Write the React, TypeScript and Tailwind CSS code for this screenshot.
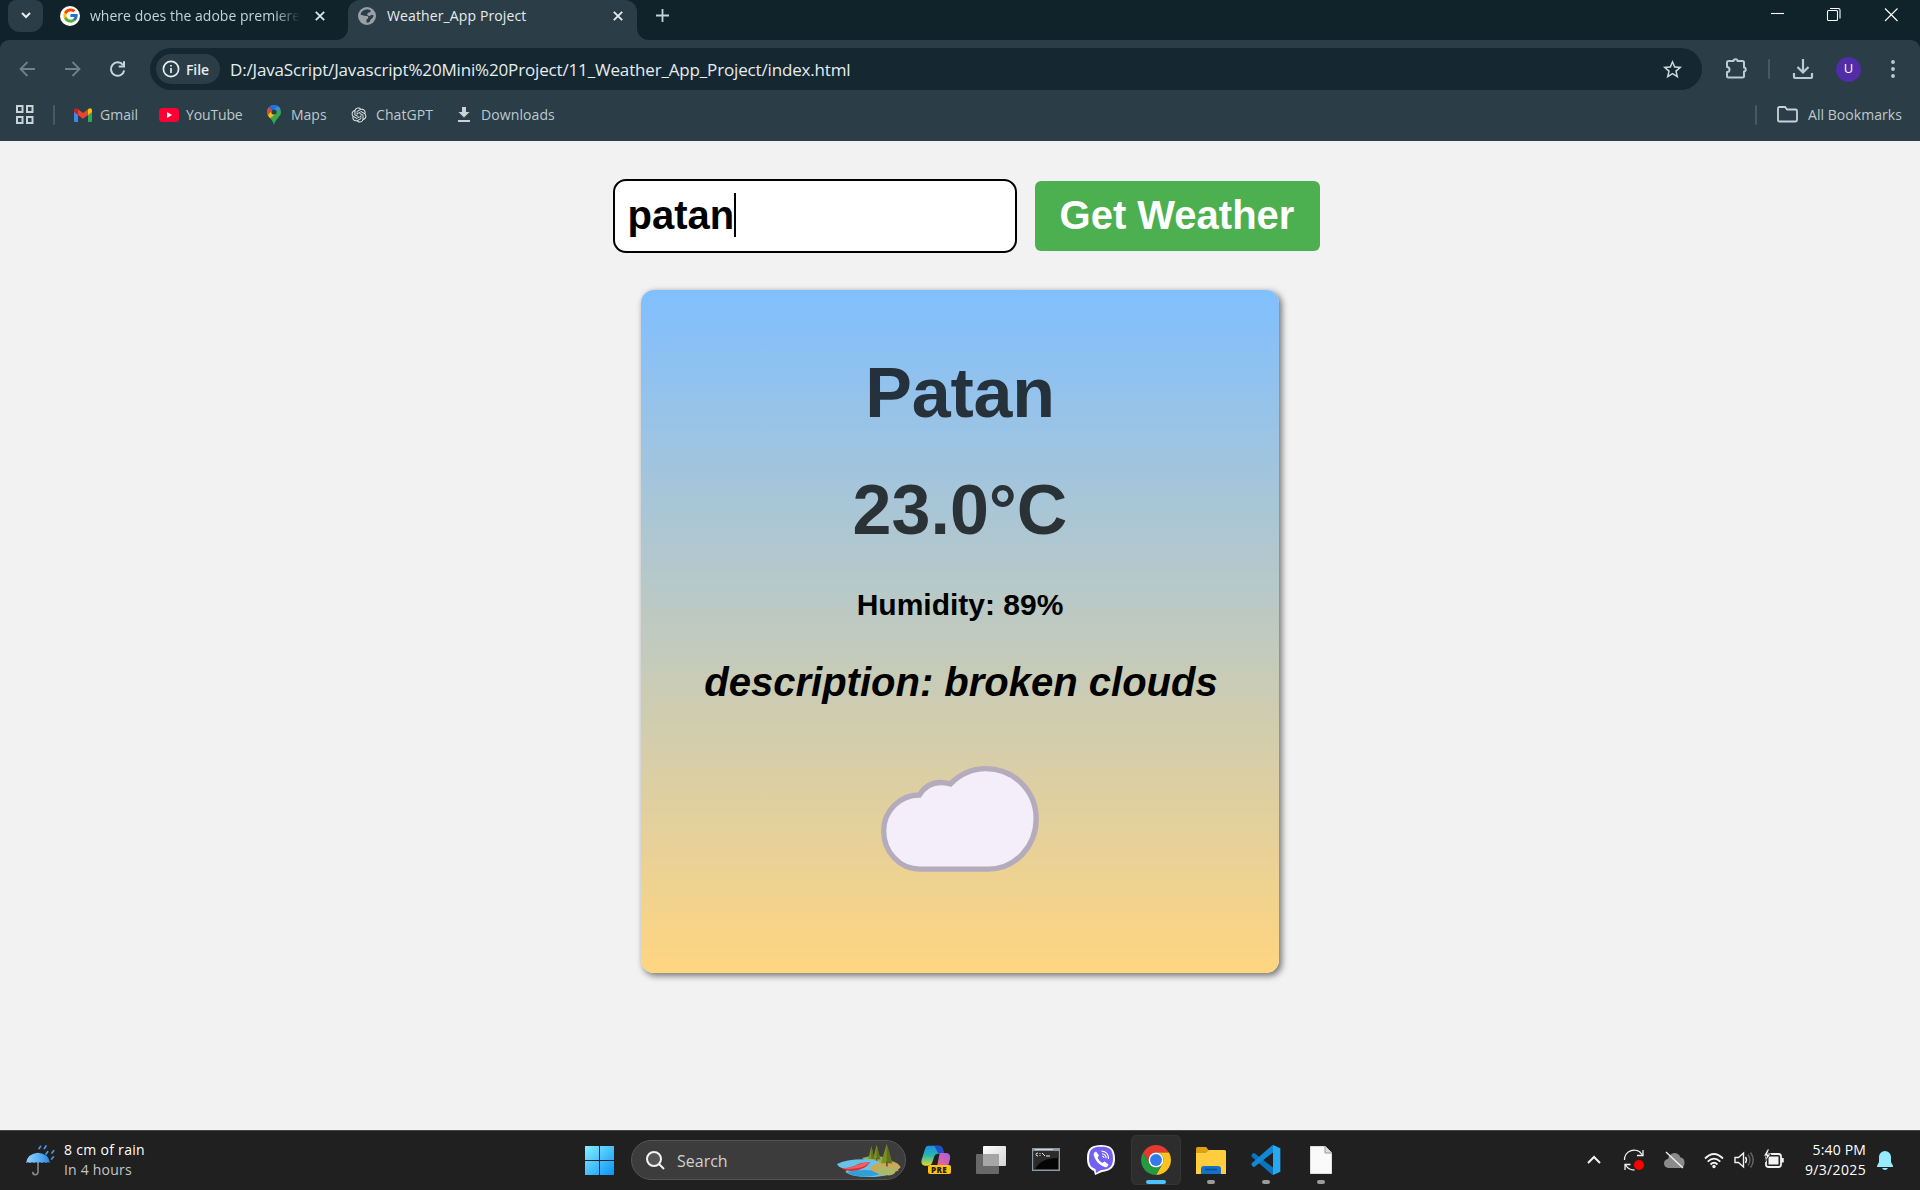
import React from "react";
import { FcGoogle } from "react-icons/fc";
import { RiOpenaiFill } from "react-icons/ri";
import { MdStarBorder } from "react-icons/md";

const ui = "font-['Open_Sans','Noto_Sans',sans-serif]";

function Cross({ className = "" }: { className?: string }) {
  return (
    <svg className={className} width="10" height="10" viewBox="0 0 10 10" stroke="currentColor" strokeWidth="1.8" fill="none">
      <path d="M.8.8l8.4 8.4M9.2.8L.8 9.2" />
    </svg>
  );
}

function GlobeIcon() {
  return (
    <svg width="18" height="18" viewBox="0 0 18 18">
      <circle cx="9" cy="9" r="9" fill="#9aa0a6" />
      <path d="M9.500 2.200Q4 2.500 2.400 7.500l3.800 1.300 3.300.2q1.500 1.200.5 2.500L8.500 12.500v3.300l3-.6 1-2.400 2-1.800 1.300-2.500-2.200-.8-2.200 1.500-2.400-1.500 1-2 2.200-.4.500-2z" fill="#2b3d46" />
      <path d="M2 9.500l2.500 1.500 1.500 2 .5 3Q2.500 14.500 2 9.500z" fill="#9aa0a6" />
    </svg>
  );
}

function TabStrip() {
  return (
    <div className="flex h-10 items-start bg-[#10232b] text-[14px] text-[#c4d3da]">
      <div className="ml-2 flex h-8 w-[35px] items-center justify-center rounded-b-[12px] rounded-t-[8px] bg-[#2b3d46] text-[#e6edf0]">
        <svg width="10" height="7" viewBox="0 0 10 7" className="-mt-0.5" fill="none" stroke="currentColor" strokeWidth="2">
          <path d="M1 1l4 4 4-4" />
        </svg>
      </div>
      <div className="flex h-[31px] w-[305px] items-center pl-[17px]">
        <span className="flex size-5 items-center justify-center rounded-full bg-white">
          <FcGoogle size={17} />
        </span>
        <span className="ml-[10px] w-[210px] overflow-hidden whitespace-nowrap tracking-[0.02px] [mask-image:linear-gradient(to_right,black_88%,transparent)]">
          where does the adobe premiere
        </span>
        <Cross className="ml-[15px] text-[#dbe5e9]" />
      </div>
      <div className="relative flex h-10 w-[289px] items-start rounded-t-[12px] bg-[#2b3d46] text-[#e6edf0]">
        <svg className="absolute -left-[12px] bottom-0" width="12" height="12" viewBox="0 0 12 12">
          <path d="M12 0v12H0A12 12 0 0 0 12 0z" fill="#2b3d46" />
        </svg>
        <svg className="absolute -right-[12px] bottom-0" width="12" height="12" viewBox="0 0 12 12">
          <path d="M0 0v12h12A12 12 0 0 1 0 0z" fill="#2b3d46" />
        </svg>
        <div className="flex h-[31px] w-full items-center pl-[10px]">
          <GlobeIcon />
          <span className="ml-[11px] w-[226px] whitespace-nowrap tracking-[0.12px]">Weather_App Project</span>
          <Cross />
        </div>
      </div>
      <svg className="ml-[19px] mt-[9px] text-[#c4d3da]" width="13" height="13" viewBox="0 0 13 13" stroke="currentColor" strokeWidth="1.8">
        <path d="M6.5 0v13M0 6.5h13" />
      </svg>
      <svg className="ml-auto mr-[22px] mt-[7px] text-white" width="127" height="15" viewBox="0 0 127 15" fill="none" stroke="currentColor" strokeWidth="1.1">
        <path d="M0 6.5h13" />
        <rect x="56.5" y="3.5" width="10" height="10" rx="1" />
        <path d="M59 1.5h8.500a1.500 1.500 0 0 1 1.500 1.500v8.500" />
        <path d="M114 1.500l12.500 12.500M126.500 1.500L114 14" />
      </svg>
    </div>
  );
}

function Toolbar() {
  return (
    <div className="bg-[#10232b]">
      <div className="flex h-[56px] items-center rounded-t-[9px] bg-[#2b3d46] pt-[2px] text-[#b9cbd3]">
        <svg className="ml-[19px]" width="108" height="18" viewBox="0 0 108 18" fill="none" strokeWidth="1.8">
          <g stroke="#71818a">
            <path d="M16 9H2M8.500 2L1.500 9l7 7" />
            <path d="M46 9h14M53.500 2l7 7-7 7" />
          </g>
          <g stroke="#c6d6dd" strokeWidth="2">
            <path d="M104 5A6.700 6.700 0 1 0 105.200 10.500" />
            <path d="M105 1.200v5.300h-5.300" />
          </g>
        </svg>
        <div className="ml-[23px] flex h-[42px] w-[1552px] items-center rounded-full bg-[#152831] pl-[6px]">
          <div className="flex h-[30px] w-[64px] items-center rounded-full bg-[#2b3d46] pl-[6px] text-[#e6edf0]">
            <svg width="18" height="18" viewBox="0 0 18 18" fill="none" stroke="currentColor" strokeWidth="1.7">
              <circle cx="9" cy="9" r="7.600" />
              <path d="M9 8v5M9 5v1.600" />
            </svg>
            <span className="ml-[6px] text-[14px] font-semibold tracking-[-0.1px]">File</span>
          </div>
          <span className="ml-[10px] mt-[2px] whitespace-nowrap text-[17px] tracking-[-0.16px] text-[#e6edf0]">
            D:/JavaScript/Javascript%20Mini%20Project/11_Weather_App_Project/index.html
          </span>
          <MdStarBorder size={23} className="ml-auto mr-[18px] text-[#ccd6da]" />
        </div>
        <svg className="ml-[22px]" width="24" height="24" viewBox="0 0 24 24" fill="none" stroke="currentColor" strokeWidth="2">
          <path d="M3 5.500q0-1.500 1.500-1.500H9.500a2 1.700 0 0 1 4 0h5q1.500 0 1.500 1.500v5a1.700 2 0 0 1 0 4v4.500q0 1.500-1.500 1.500h-14Q3 20.500 3 19v-4a2.500 2.500 0 0 0 0-5z" strokeLinejoin="round" />
        </svg>
        <span className="ml-[20px] h-5 w-[2px] rounded bg-[#445a65]" />
        <svg className="ml-[22px]" width="22" height="22" viewBox="0 0 22 22" fill="none" stroke="currentColor" strokeWidth="2.200">
          <path d="M11 1v13M5.500 9l5.500 5.500L16.500 9M2 15v4q0 1 1 1h16q1 0 1-1v-4" />
        </svg>
        <span className="ml-[22px] flex size-[25px] items-center justify-center rounded-full bg-[#512da8] text-[13px] text-white">U</span>
        <svg className="ml-[30px]" width="4" height="20" viewBox="0 0 4 20" fill="currentColor">
          <circle cx="2" cy="3" r="1.900" />
          <circle cx="2" cy="10" r="1.900" />
          <circle cx="2" cy="17" r="1.900" />
        </svg>
      </div>
    </div>
  );
}

function GmailIcon() {
  return (
    <svg width="18" height="14" viewBox="0 0 18 14">
      <path d="M0 2v10.800Q0 14 1.200 14H4V5z" fill="#4285f4" />
      <path d="M18 2v10.800q0 1.200-1.200 1.200H14V5z" fill="#34a853" />
      <path d="M14 1.200V7l4-3V2.200C18 .2 15.800-.6 14 1.200z" fill="#fbbc04" />
      <path d="M4 1.200V7l5 3.800L14 7V1.200L9 5z" fill="#ea4335" />
      <path d="M4 1.200V7L0 4V2.200C0 .2 2.200-.6 4 1.200z" fill="#c5221f" />
    </svg>
  );
}

function MapsIcon() {
  return (
    <svg width="14" height="20" viewBox="0 0 14 20">
      <path d="M7 0a7 7 0 0 0-7 7c0 5 5.500 6.500 7 13 1.500-6.500 7-8 7-13a7 7 0 0 0-7-7z" fill="#34a853" />
      <path d="M7 0a7 7 0 0 0-5.400 2.500L5 5.400 11 1.300A7 7 0 0 0 7 0z" fill="#1a73e8" />
      <path d="M11 1.300L4.800 9 13.500 4.300A7 7 0 0 0 11 1.300z" fill="#4285f4" />
      <path d="M1.600 2.500A7 7 0 0 0 .9 10.300L5 5.400z" fill="#ea4335" />
      <path d="M.9 10.300q.8 1.600 2.200 3L9 8.700 5 5.400z" fill="#fbbc04" />
      <circle cx="7" cy="7" r="2.600" fill="#2b3d46" />
    </svg>
  );
}

function Bookmarks() {
  return (
    <div className="flex h-[45px] items-center bg-[#2b3d46] pb-[8px] text-[14px] text-[#bdc9cf]">
      <svg className="ml-[16px]" width="18" height="19" viewBox="0 0 18 19" fill="none" stroke="#c9d2d6" strokeWidth="2">
        <rect x="1" y="1" width="5.500" height="6" />
        <rect x="11" y="1" width="5.500" height="6" />
        <rect x="1" y="12" width="5.500" height="6" />
        <rect x="11" y="12" width="5.500" height="6" />
      </svg>
      <span className="ml-[19px] h-5 w-[2px] rounded bg-[#445a65]" />
      <div className="ml-[19px] flex w-[85px] items-center gap-[8px]"><GmailIcon />Gmail</div>
      <div className="flex w-[108px] items-center gap-[7px] tracking-[-0.15px]">
        <svg width="20" height="14" viewBox="0 0 20 14">
          <rect width="20" height="14" rx="3.500" fill="#ff0033" />
          <path d="M8 4v6l5-3z" fill="#fff" />
        </svg>
        YouTube
      </div>
      <div className="flex w-[83px] items-center gap-[10px]"><MapsIcon />Maps</div>
      <div className="flex w-[108px] items-center gap-[8px] tracking-[0.1px]"><RiOpenaiFill size={18} className="text-[#dfe6e9]" />ChatGPT</div>
      <div className="flex items-center gap-[11px] tracking-[0.1px]">
        <svg width="12" height="15" viewBox="0 0 12 15" fill="#c9d2d6">
          <path d="M4 0h4v5h3.500L6 10.500.500 5H4zM0 13h12v2H0z" />
        </svg>
        Downloads
      </div>
      <span className="ml-auto h-5 w-[2px] rounded bg-[#445a65]" />
      <svg className="ml-[20px]" width="21" height="17" viewBox="0 0 21 17" fill="none" stroke="#c9d2d6" strokeWidth="1.800">
        <path d="M1 2.500Q1 1 2.500 1H8l2.200 2.500h8.300q1.500 0 1.500 1.500v9q0 1.500-1.500 1.500h-16Q1 15.500 1 14z" />
      </svg>
      <span className="ml-[10px] mr-[17px] w-[95px] whitespace-nowrap tracking-[0.05px]">All Bookmarks</span>
    </div>
  );
}

function WeatherPage() {
  return (
    <div className="flex h-[989px] flex-col items-center bg-[#f2f2f2] font-['Liberation_Sans',Arial,sans-serif] font-bold text-black">
      <div className="mt-[38px] flex h-[74px] w-[707px] translate-x-[6px] items-start">
        <div className="flex h-[74px] w-[404px] items-center rounded-[13px] border-2 border-black bg-white pl-[13px] text-[40px] leading-[46px]">
          <span className="-mt-[3px]">patan</span>
          <span className="h-[44px] w-[1.500px] -translate-y-px bg-black" />
        </div>
        <div className="ml-[18px] mt-[2px] flex h-[70px] w-[285px] items-center justify-center rounded-[6px] bg-[#4caf50] pb-[2px] text-[40px] leading-[46px] text-white">
          Get Weather
        </div>
      </div>
      <div className="mt-[37px] flex h-[683px] w-[638px] flex-col items-center rounded-[13px] bg-linear-to-b/srgb from-[#80bfff] to-[#ffd580] shadow-[2.500px_2.500px_6px_rgba(0,0,0,0.5)]">
        <h1 className="mt-[63px] text-[70px] leading-[80px] tracking-[-0.2px] text-black/75">Patan</h1>
        <p className="mt-[37px] text-[70px] leading-[80px] text-black/75">23.0°C</p>
        <p className="mt-[38px] text-[30px] leading-[34px]">Humidity: 89%</p>
        <p className="ml-[2px] mt-[37px] text-[40px] italic leading-[46px]">description: broken clouds</p>
        <svg className="mt-[61px]" width="158" height="106" viewBox="123 78 474 318" fill="#f3eef9" stroke="#b4acbc" strokeWidth="16">
          <path d="M240 387.500C178 387.500 131 335 131 272C131 212 180 165 238 165C258 133 290 120 331 132C360 103 395 86 437 86C525 86 588.500 155 588.500 237C588.500 317 527 387.500 445 387.500Z" />
        </svg>
      </div>
    </div>
  );
}

function ChromeIcon() {
  return (
    <svg width="30" height="30" viewBox="2 2 44 44">
      <path d="M4.950 13A22 22 0 0 1 43.050 13L24 13A11 11 0 0 0 14.470 29.500Z" fill="#e33b2e" />
      <path d="M43.050 13A22 22 0 0 1 24 46L33.530 29.500A11 11 0 0 0 24 13Z" fill="#fcc31e" />
      <path d="M24 46A22 22 0 0 1 4.950 13L14.470 29.500A11 11 0 0 0 33.530 29.500Z" fill="#249a41" />
      <circle cx="24" cy="24" r="11" fill="#fff" />
      <circle cx="24" cy="24" r="8.700" fill="#2f7bea" />
    </svg>
  );
}

function LakeArt() {
  return (
    <svg width="64" height="33" viewBox="0 0 192 99">
      <path d="M75 42q30-10 60-4l30 12 20 30q-30 10-60 0z" fill="#8fae5a" />
      <path d="M0 60Q25 46 80 46q40 0 60 14l20 28q-20 12-60 11-60 0-75-16 10-6-3-10Q5 72 0 60z" fill="#68c3ea" />
      <path d="M30 84q50-12 110 0-20 14-60 14-40-2-50-14z" fill="#2f9fd6" />
      <path d="M98 72q20-20 60-22 26 4 33 20-16 20-50 20-30 0-43-18z" fill="#c9a95a" />
      <path d="M14 73q10 8 30 8 40-2 56-26-30 0-46 10-20 8-40 8z" fill="#d92f36" />
      <path d="M14 73q30-2 46-10 20-8 38-8-10 14-40 18-24 4-44 0z" fill="#f26060" />
      <path d="M103 6l9 38H94zM119 2l11 44h-22zM149 0l17 58h-34z" fill="#7e8f22" />
      <path d="M103 6l9 38h-9zM119 2l11 44h-11zM149 0l17 58h-17z" fill="#5f7420" />
      <path d="M147 54h5v14h-5zM117 42h4v8h-4z" fill="#7a4a26" />
      <path d="M122 88q2-18 12-20 10-8 20 4 14-4 22 10-4 14-26 12-20 4-28-6z" fill="#a9b968" />
    </svg>
  );
}

function CopilotIcon() {
  return (
    <span className="relative block h-[30px] w-[30px]">
      <svg width="30" height="26" viewBox="0 0 90 78">
        <defs>
          <linearGradient id="cpA" x1="0" y1="0" x2="0" y2="1">
            <stop offset="0" stopColor="#1c8fe8" />
            <stop offset=".5" stopColor="#29b7b0" />
            <stop offset="1" stopColor="#e4d72c" />
          </linearGradient>
          <linearGradient id="cpB" x1="1" y1="0" x2="0" y2="1">
            <stop offset="0" stopColor="#a45ee8" />
            <stop offset=".6" stopColor="#e2639c" />
            <stop offset="1" stopColor="#f79a55" />
          </linearGradient>
        </defs>
        <path d="M22 2h30q10 0 13 10l4 14H50q-8 0-10 8l-6 18q-3 10-14 10H12Q-2 60 2 44L12 12Q15 2 22 2z" fill="url(#cpA)" />
        <path d="M40 2h14q9 0 12 10l4 14H56q-6-2-8-8z" fill="#1f50c8" />
        <path d="M58 24h18q14 2 11 18l-7 26q-3 8-12 8H38q8-2 10-10l6-32q1-8 4-10z" fill="url(#cpB)" />
      </svg>
      <span className="absolute bottom-[1px] left-[7px] flex h-[9px] w-[23px] items-center justify-center rounded-[2px] bg-[#ffc20e] text-[8px] font-extrabold leading-none tracking-[0.400px] text-[#1d1d1d]">PRE</span>
    </span>
  );
}

function VsCodeIcon() {
  return (
    <svg width="30" height="30" viewBox="0 0 90 90">
      <path d="M4 27q3-4 7-2L67 68v21q-3 1-5-1L2 35q-2-3 2-8z" fill="#0a74bd" />
      <path d="M4 63q3 4 7 2L67 22V1q-3-1-5 1L2 55q-2 3 2 8z" fill="#1287d4" />
      <path d="M66 0v90l22-10V10z" fill="#29a8f2" />
    </svg>
  );
}

function Dot() {
  return <span className="absolute bottom-[6px] h-[4px] w-[8px] rounded-full bg-[#9b9b9b]" />;
}

function TaskSlot({ children, className = "" }: { children: React.ReactNode; className?: string }) {
  return <div className={"relative flex h-[60px] w-[55px] shrink-0 items-center justify-center " + className}>{children}</div>;
}

function Taskbar() {
  return (
    <div className="flex h-[60px] items-center bg-[#202021] shadow-[inset_0_1px_0_#454647]">
      <div className="flex w-[585px] items-center pl-[25px]">
        <svg width="30" height="31" viewBox="0 0 90 93">
          <defs>
            <linearGradient id="umb" x1="0" x2="1">
              <stop offset="0" stopColor="#9bd0fb" />
              <stop offset=".5" stopColor="#5db4f8" />
              <stop offset="1" stopColor="#2c86dc" />
            </linearGradient>
          </defs>
          <path d="M39 52v30q-2 8-9 7-7-1-7-9" fill="none" stroke="#858585" strokeWidth="5" />
          <path d="M3 54Q8 25 39 23q31 2 36 31-6-5-12 0-6-5-12 0-6-5-12 0-6-5-12 0-6-5-12 0-6-5-12 0z" fill="url(#umb)" />
          <path d="M47 4l-5 7M63 3l-5 8M68 20l-5 7M86 17l-5 7M85 36l-5 6" stroke="#429de8" strokeWidth="5" strokeLinecap="round" />
        </svg>
        <div className="ml-[9px] whitespace-nowrap text-[14px] leading-5">
          <p className="tracking-[0.300px] text-white">8 cm of rain</p>
          <p className="tracking-[0.200px] text-[#c5c5c5]">In 4 hours</p>
        </div>
      </div>
      <svg width="29" height="29" viewBox="0 0 29 29">
        <defs>
          <linearGradient id="win" x1="0" y1="0" x2="1" y2="1">
            <stop offset="0" stopColor="#84f0ff" />
            <stop offset="1" stopColor="#0a93f8" />
          </linearGradient>
        </defs>
        <path d="M0 0h14v14H0zM15 0h14v14H15zM0 15h14v14H0zM15 15h14v14H15z" fill="url(#win)" />
      </svg>
      <div className="ml-[17px] flex h-10 w-[275px] items-center rounded-full border border-[#555] bg-[#3c3c3d] pl-[14px] text-[16px] text-[#d0d0d0]">
        <svg width="19" height="19" viewBox="0 0 19 19" fill="#555" stroke="#f2f2f2" strokeWidth="2">
          <circle cx="8" cy="8" r="7" />
          <path d="M13 13l5 5" />
        </svg>
        <span className="ml-[12px] mt-[2px]">Search</span>
        <span className="ml-auto mr-[4px]"><LakeArt /></span>
      </div>
      <TaskSlot className="ml-[2px]"><CopilotIcon /></TaskSlot>
      <TaskSlot>
        <svg width="30" height="28" viewBox="0 0 30 28">
          <defs>
            <linearGradient id="tvw" x1="0" y1="0" x2="1" y2="1"><stop offset="0" stopColor="#fff" /><stop offset="1" stopColor="#d2d2d2" /></linearGradient>
          </defs>
          <rect x="7" width="23" height="20" rx="1" fill="url(#tvw)" />
          <rect y="8" width="23" height="20" rx="1" fill="#686868" />
          <path d="M7 8h16v12H7z" fill="#a6a6a6" />
        </svg>
      </TaskSlot>
      <TaskSlot className="pb-0.5">
        <svg width="28" height="23" viewBox="0 0 28 23">
          <rect width="28" height="23" fill="#8e98a1" />
          <rect x="1.500" y="3" width="25" height="18.500" fill="#050505" />
          <path d="M1.500 3h25v7Q8 10 3 21.500H1.500z" fill="#2b2b2b" />
          <path d="M3 1.500h18" stroke="#cdd3d8" />
          <path d="M6 5q-2 0-2 1.500T6 8M8 5v1M8 7v1M10 5l3 3M14 8h4" stroke="#eee" fill="none" />
        </svg>
      </TaskSlot>
      <TaskSlot>
        <svg width="30" height="30" viewBox="0 0 30 30">
          <path d="M15 0C24 0 29 3 29 14c0 9-5 12-13 13l-7 3-1-4C3 24 1 20 1 13 1 3 6 0 15 0z" fill="#fff" />
          <path d="M15 1.800c8.500 0 12 2 12 12 0 8-4 11-12 11.200l-5 3-.5-4C4.500 22.500 3 19 3 13.500 3 4 7 1.800 15 1.800z" fill="#7360f2" />
          <path d="M10 6.500l3 4-1.500 2q1.500 4 5 5.500l2-1.500 4 3q-1 3.500-4 2.500Q9 18 7.500 9q.5-2 2.500-2.500z" fill="#fff" />
          <path d="M15.500 6q7 .5 7 8M16 8.700q4 .3 4.200 4.600M16.200 11q1.700.2 1.800 2" fill="none" stroke="#fff" strokeWidth="1.100" />
        </svg>
      </TaskSlot>
      <TaskSlot>
        <span className="absolute h-[50px] w-[50px] rounded-[5px] border border-[#353536] bg-[#2d2d2e]" />
        <span className="relative"><ChromeIcon /></span>
        <span className="absolute bottom-[6px] h-[4px] w-[20px] rounded-full bg-[#4cc2ff]" />
      </TaskSlot>
      <TaskSlot>
        <svg width="30" height="27" viewBox="0 0 30 27">
          <path d="M0 1.500Q0 0 1.500 0H10l3 3.500V9H0z" fill="#dfa013" />
          <path d="M0 6h10l3-3h15.500Q30 3 30 4.500V27H0z" fill="#ffcd3e" />
          <path d="M5 27v-5q0-3 3-3h14q3 0 3 3v5z" fill="#1172c6" />
          <path d="M9 22.500h12" stroke="#084d94" strokeWidth="1.500" />
        </svg>
        <Dot />
      </TaskSlot>
      <TaskSlot><VsCodeIcon /><Dot /></TaskSlot>
      <TaskSlot>
        <svg width="22" height="28" viewBox="0 0 22 28">
          <path d="M0 0h15l7 7v21H0z" fill="#fafafa" stroke="#aaa" strokeWidth=".7" />
          <path d="M15 0v7h7" fill="#ddd" stroke="#999" />
        </svg>
        <Dot />
      </TaskSlot>
      <svg className="ml-auto" width="200" height="30" viewBox="0 0 200 30" fill="none" stroke="#f2f2f2" strokeWidth="1.800">
        <path d="M2 18l6-6 6 6" strokeWidth="2" />
        <g strokeWidth="1.300">
          <path d="M38.500 15A9.500 9.500 0 0 1 56 9.500M57 5v5.500h-6" />
          <path d="M39 25v-5.500h5.500M39.500 20q3 5 9 5" />
        </g>
        <circle cx="53" cy="20" r="5" fill="#f00" stroke="none" />
        <path d="M82 23q-4-1-4-4.500 0-4 4-4.500 1-5 6-6 5 0 6.500 4.500 4 .5 4 5 0 5-4.500 5.500z" fill="#8b8b8b" stroke="none" />
        <path d="M80 7l17 16" strokeWidth="1.300" />
        <g>
          <path d="M119 13.500q9-9 18 0M121.700 16.700q6.300-6.200 12.600 0M124.500 19.500q3.500-3.400 7 0" />
          <circle cx="128" cy="21.500" r="1.700" fill="#f2f2f2" stroke="none" />
        </g>
        <g strokeWidth="1.400">
          <path d="M149 12.500h3.500l5-4.500v14l-5-4.500H149z" />
          <path d="M159.500 12q2 3 0 6" />
          <path d="M162 9.500q4 5.500 0 11M164.500 7.500q5.500 7.500 0 15" stroke="#666" />
        </g>
        <rect x="180" y="9" width="15" height="13" rx="2.500" />
        <rect x="182.500" y="11.500" width="10" height="8" fill="#f2f2f2" stroke="none" />
        <path d="M196.500 13v4.500" strokeWidth="2.500" />
        <path d="M181.500 4l-4 7h3l-1.500 6 6-8h-3.500l2-5z" fill="#f2f2f2" stroke="#202021" strokeWidth=".8" />
      </svg>
      <div className="w-[80px] whitespace-nowrap text-right text-[14px] leading-5 text-white">
        <p className="tracking-[0.150px]">5:40 PM</p>
        <p className="tracking-[0.350px]">9/3/2025</p>
      </div>
      <svg className="ml-[11px] mr-[27px]" width="16" height="19" viewBox="0 0 16 19" fill="#97ebff">
        <path d="M8 0a6 6 0 0 0-6 6v5L0 15v1h16v-1l-2-4V6A6 6 0 0 0 8 0zM5 17h6q-1 2-3 2t-3-2z" />
      </svg>
    </div>
  );
}

export default function App() {
  return (
    <div className={"h-[1190px] w-[1920px] overflow-hidden bg-[#f2f2f2] " + ui}>
      <TabStrip />
      <Toolbar />
      <Bookmarks />
      <WeatherPage />
      <Taskbar />
    </div>
  );
}
